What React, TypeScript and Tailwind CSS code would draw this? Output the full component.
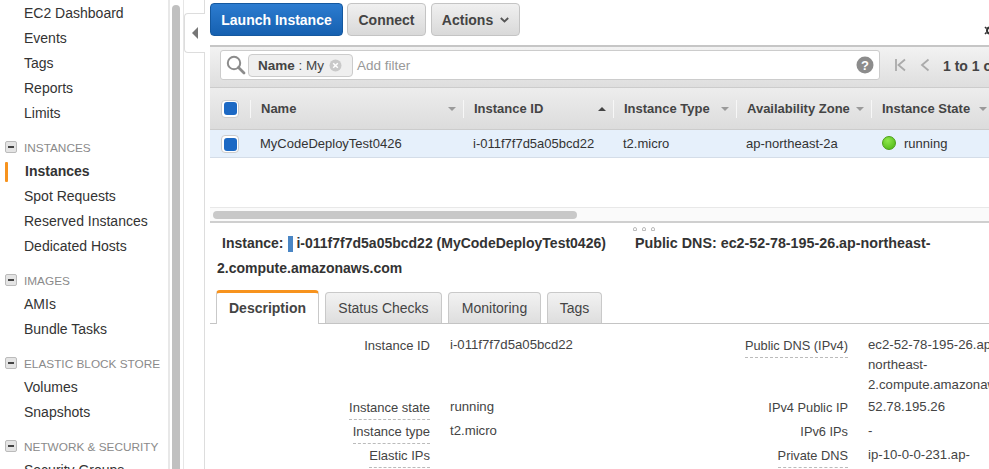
const nav: { title?: string; items: string[] }[] = [
  { items: ["EC2 Dashboard", "Events", "Tags", "Reports", "Limits"] },
  { title: "INSTANCES", items: ["Instances", "Spot Requests", "Reserved Instances", "Dedicated Hosts"] },
  { title: "IMAGES", items: ["AMIs", "Bundle Tasks"] },
  { title: "ELASTIC BLOCK STORE", items: ["Volumes", "Snapshots"] },
  { title: "NETWORK & SECURITY", items: ["Security Groups"] },
];

function Sidebar() {
  return (
    <aside className="w-[168px] shrink-0 pt-px text-[14px] text-[#333]">
      {nav.map((g, i) => (
        <div key={i}>
          {g.title && (
            <div className="mt-[9px] flex h-[24px] items-center whitespace-nowrap pl-[5px] text-[11.8px] text-[#8a8a8a]">
              <span className="mr-[7px] flex h-[12px] w-[12px] shrink-0 items-center justify-center rounded-[2px] border border-[#bbb] bg-[#e4e4e4]">
                <span className="h-[2px] w-[6px] bg-[#444]" />
              </span>
              <span className="pt-[3px]">{g.title}</span>
            </div>
          )}
          {g.items.map((it) =>
            it === "Instances" ? (
              <div key={it} className="flex h-[25px] items-center pl-[5px] font-bold">
                <span className="mr-[17px] h-[20px] w-[3px] rounded-[1px] bg-[#f7931e]" />
                <span>{it}</span>
              </div>
            ) : (
              <div key={it} className="flex h-[25px] items-center pl-[24px]">{it}</div>
            ),
          )}
        </div>
      ))}
    </aside>
  );
}

function Btn({ children, w }: { children: React.ReactNode; w: string }) {
  return (
    <button className={`flex h-[33px] items-center justify-center rounded-[4px] border border-[#c4c4c4] bg-gradient-to-b from-[#f0f0f0] to-[#d9d9d9] pt-px text-[14px] font-bold text-[#444] ${w}`}>
      {children}
    </button>
  );
}

function Sort({ up, dark }: { up?: boolean; dark?: boolean }) {
  return (
    <svg width="8" height="4" viewBox="0 0 8 4" className="block shrink-0">
      <path d={up ? "M0 4 L4 0 L8 4 Z" : "M0 0 L8 0 L4 4 Z"} fill={dark ? "#444" : "#9a9a9a"} />
    </svg>
  );
}

const cols = [
  { t: "Name", w: "w-[213px]" },
  { t: "Instance ID", w: "w-[150px]", up: true },
  { t: "Instance Type", w: "w-[123px]" },
  { t: "Availability Zone", w: "w-[135px]" },
  { t: "Instance State", w: "w-[123px]" },
];

function Check({ ml }: { ml: string }) {
  return (
    <span className={`flex h-[18px] w-[18px] shrink-0 items-center justify-center rounded-[4px] border border-[#ccc] bg-white ${ml}`}>
      <span className="h-[13px] w-[13px] rounded-[3px] bg-[#1c69c4]" />
    </span>
  );
}

function Toolbar() {
  return (
    <div className="flex h-[45px] shrink-0 items-start gap-[4px] pt-[3px]">
      <button className="flex h-[33px] w-[133px] items-center justify-center rounded-[4px] border border-[#14589f] bg-gradient-to-b from-[#2c7cd0] to-[#1560b0] pt-px text-[14px] font-bold text-white">
        Launch Instance
      </button>
      <Btn w="w-[79px]">Connect</Btn>
      <Btn w="w-[89px] ml-px">
        Actions
        <svg width="9" height="6" viewBox="0 0 9 6" className="ml-[7px]">
          <path d="M0.8 1 L4.5 4.5 L8.2 1" fill="none" stroke="#555" strokeWidth="1.8" />
        </svg>
      </Btn>
      <svg width="12" height="11" viewBox="0 0 12 11" className="ml-auto mr-[-7px] mt-[22px] shrink-0">
        <circle cx="6" cy="5.5" r="3" fill="none" stroke="#333" strokeWidth="2" />
        <path d="M6 0 V2 M6 9 V11 M1 2 L2.5 3.5 M1 9 L2.5 7.5 M11 2 L9.5 3.5 M11 9 L9.5 7.5" stroke="#333" strokeWidth="1.6" />
      </svg>
    </div>
  );
}

function FilterBar() {
  return (
    <div className="flex h-[42px] shrink-0 items-start border-t-2 border-[#c6c6c6] bg-gradient-to-b from-[#f2f2f2] to-[#dedede] pt-[3px]">
      <div className="ml-[10px] flex h-[30px] w-[660px] shrink-0 items-center rounded-[3px] border border-[#ccc] bg-white">
        <svg width="20" height="20" viewBox="0 0 20 20" className="ml-[5px] shrink-0">
          <circle cx="8" cy="8" r="6.2" fill="none" stroke="#8c8c8c" strokeWidth="2" />
          <path d="M12.5 12.5 L18 18" stroke="#8c8c8c" strokeWidth="2.8" strokeLinecap="round" />
        </svg>
        <span className="ml-[2px] flex h-[23px] w-[105px] shrink-0 items-center rounded-[4px] border border-[#ccc] bg-[#efefef] pl-[9px] text-[13.5px] text-[#444]">
          <span className="flex pt-[2px]">
            <b>Name</b>&nbsp;:&nbsp;My
          </span>
          <svg width="13" height="13" viewBox="0 0 13 13" className="ml-[5px]">
            <circle cx="6.5" cy="6.5" r="6" fill="#c9c9c9" />
            <path d="M4.2 4.2 L8.8 8.8 M8.8 4.2 L4.2 8.8" stroke="#fff" strokeWidth="1.5" />
          </svg>
        </span>
        <span className="ml-[4px] pt-[2px] text-[13.5px] text-[#999]">Add filter</span>
        <svg width="18" height="18" viewBox="0 0 18 18" className="ml-auto mr-[5px]">
          <circle cx="9" cy="9" r="8.5" fill="#8c8c8c" />
          <text x="9" y="13.5" textAnchor="middle" fontSize="13" fontWeight="700" fill="#fff" fontFamily="Liberation Sans">?</text>
        </svg>
      </div>
      <svg width="11" height="14" viewBox="0 0 11 14" className="ml-[15px] mt-[8px] shrink-0">
        <path d="M1 1 V13 M10 1.5 L3.5 7 L10 12.5" fill="none" stroke="#aaa" strokeWidth="1.8" />
      </svg>
      <svg width="10" height="14" viewBox="0 0 10 14" className="ml-[14px] mt-[8px] shrink-0">
        <path d="M8.5 1.5 L2 7 L8.5 12.5" fill="none" stroke="#aaa" strokeWidth="1.8" />
      </svg>
      <span className="ml-[13px] mt-[7px] whitespace-nowrap text-[14px] font-bold leading-[18px] text-[#444]">1 to 1 of 1</span>
    </div>
  );
}

function Table() {
  return (
    <div className="h-[120px] shrink-0">
      <div className="flex h-[43px] items-center border-y border-[#ccc] bg-gradient-to-b from-[#ededed] to-[#dcdcdc]">
        <div className="flex w-[40px] shrink-0 items-center">
          <Check ml="ml-[11px]" />
        </div>
        {cols.map((c) => (
          <div key={c.t} className={`flex h-[18px] shrink-0 items-center border-l border-[#f7f7f7] pl-[10px] pt-px text-[13px] font-bold text-[#444] ${c.w}`}>
            <span className="whitespace-nowrap">{c.t}</span>
            <span className="ml-auto mr-[7px]">
              <Sort up={c.up} dark={c.up} />
            </span>
          </div>
        ))}
      </div>
      <div className="flex h-[28px] items-center border-b border-[#d4dde8] bg-[#e6f0fb] pt-px text-[13px] text-[#333]">
        <div className="flex w-[50px] shrink-0 items-center">
          <Check ml="ml-[11px]" />
        </div>
        <span className="w-[213px] shrink-0">MyCodeDeployTest0426</span>
        <span className="w-[150px] shrink-0">i-011f7f7d5a05bcd22</span>
        <span className="w-[123px] shrink-0">t2.micro</span>
        <span className="w-[136px] shrink-0">ap-northeast-2a</span>
        <span className="flex items-center">
          <span className="mr-[8px] h-[14px] w-[14px] -translate-y-px rounded-full border border-[#4a9e16] bg-[radial-gradient(circle_at_40%_30%,#8fe84c,#49b30f)]" />
          running
        </span>
      </div>
    </div>
  );
}

function HScroll() {
  return (
    <div className="flex h-[16px] shrink-0 items-center border-t border-t-[#e8e8e8] border-b-2 border-b-[#cfcfcf] bg-[#fafafa] pl-[3px]">
      <div className="h-[8px] w-[364px] rounded-full bg-[#c8c8c8]" />
    </div>
  );
}

function Row({ l, v, l2, v2, h, dash, dash2 }: { l: string; v: string; l2: string; v2: React.ReactNode; h: string; dash?: boolean; dash2?: boolean }) {
  return (
    <div className={`flex text-[13px] leading-[20px] text-[#444] ${h}`}>
      <div className="flex w-[220px] shrink-0 justify-end">
        <span className={`h-[22px] ${dash ? "border-b border-dashed border-[#bbb]" : ""}`}>{l}</span>
      </div>
      <div className="ml-[20px] w-[210px] shrink-0 -translate-y-[1px] text-[13.2px]">{v}</div>
      <div className="flex w-[188px] shrink-0 justify-end text-[12.8px]">
        <span className={`h-[22px] ${dash2 ? "border-b border-dashed border-[#bbb]" : ""}`}>{l2}</span>
      </div>
      <div className="ml-[20px] -translate-y-[1px] whitespace-nowrap text-[13.2px]">{v2}</div>
    </div>
  );
}

function Details() {
  const tabs = [
    ["Status Checks", "w-[117px]"],
    ["Monitoring", "w-[93px]"],
    ["Tags", "w-[55px]"],
  ];
  return (
    <div className="min-h-0 flex-1">
      <div className="flex h-[8px] items-start gap-[5px] pl-[423px] pt-[4px]">
        <span className="h-[4px] w-[4px] rounded-t-[2px] border border-[#bbb]" />
        <span className="h-[4px] w-[4px] rounded-t-[2px] border border-[#bbb]" />
        <span className="h-[4px] w-[4px] rounded-t-[2px] border border-[#bbb]" />
      </div>
      <div className="pl-[12px] text-[14px] font-bold leading-[25px] text-[#333]">
        <div className="flex items-center whitespace-nowrap">
          <span>Instance:</span>
          <span className="ml-[5px] mr-[3px] h-[16px] w-[5px] bg-[#4a86c5]" />
          <span>i-011f7f7d5a05bcd22 (MyCodeDeployTest0426)</span>
          <span className="ml-[29px] text-[14.3px]">Public DNS: ec2-52-78-195-26.ap-northeast-</span>
        </div>
        <div className="-ml-[5px]">2.compute.amazonaws.com</div>
      </div>
      <div className="mt-[9px] flex h-[34px] items-end border-b border-[#c4c4c4] pl-[6px]">
        <div className="relative top-px flex h-[34px] w-[103px] items-center justify-center rounded-t-[4px] border-x border-t-[3px] border-x-[#c9c9c9] border-t-[#f7931e] bg-white text-[14px] font-bold text-[#444]">
          Description
        </div>
        {tabs.map(([t, w]) => (
          <div key={t} className={`ml-[6px] flex h-[31px] items-center justify-center rounded-t-[4px] border-x border-t border-[#c9c9c9] bg-gradient-to-b from-[#f2f2f2] to-[#dedede] text-[14px] text-[#444] ${w}`}>
            {t}
          </div>
        ))}
      </div>
      <div className="pt-[12px]">
        <Row h="h-[62px]" l="Instance ID" v="i-011f7f7d5a05bcd22" l2="Public DNS (IPv4)" dash2 v2={<>ec2-52-78-195-26.ap-<br />northeast-<br />2.compute.amazonaws.com</>} />
        <Row h="h-[24px]" l="Instance state" dash v="running" l2="IPv4 Public IP" v2="52.78.195.26" />
        <Row h="h-[24px]" l="Instance type" dash v="t2.micro" l2="IPv6 IPs" v2="-" />
        <Row h="h-[24px]" l="Elastic IPs" dash v="" l2="Private DNS" dash2 v2="ip-10-0-0-231.ap-" />
      </div>
    </div>
  );
}

export default function App() {
  return (
    <div className="flex h-[469px] w-[989px] overflow-hidden bg-white font-['Liberation_Sans',Arial,sans-serif]">
      <Sidebar />
      <div className="flex w-[15px] shrink-0 border-l-2 border-[#e8e8e8] pl-[2px]">
        <div className="mt-[5px] w-[8px] rounded-t-full bg-[#c0c0c0]" />
      </div>
      <div className="flex w-[22px] shrink-0 border-l border-[#e6e6e6]">
        <div className="flex w-full flex-col">
          <div className="h-[13px] w-full border-r border-[#ddd]" />
          <div className="flex h-[40px] w-full items-center justify-center rounded-l-[4px] border-y border-l border-[#ddd]">
            <span className="h-0 w-0 border-y-[6px] border-r-[6px] border-y-transparent border-r-[#777]" />
          </div>
          <div className="flex-1 border-r border-[#ddd]" />
        </div>
      </div>
      <div className="w-[5px] shrink-0" />
      <main className="flex min-w-0 flex-1 flex-col">
        <Toolbar />
        <FilterBar />
        <Table />
        <HScroll />
        <Details />
      </main>
    </div>
  );
}
